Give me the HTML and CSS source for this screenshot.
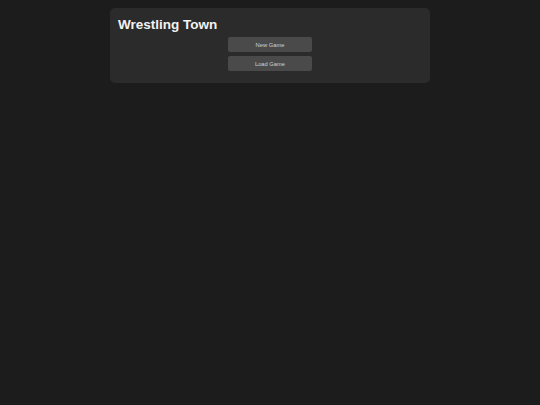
FILE: index.html
```html
<!DOCTYPE html>
<html>
<head>
  <title>Wrestling Town</title>
  <link rel="stylesheet" href="styles.css">
</head>
<body>
  <div id="game">
    <h1>Wrestling Town</h1>
    <div class="menu">
      <button id="newGame">New Game</button>
      <button id="loadGame">Load Game</button>
    </div>
  </div>
</body>
</html>
```

FILE: styles.css
```css
body {
  font-family: "Liberation Sans", Arial, sans-serif;
  background-color: #1c1c1c;
  color: #f2f2f2;
  margin: 0;
  padding: 8px 0;
}
#game {
  width: 304px;
  margin: 0 auto;
  background-color: #2b2b2b;
  border-radius: 5px;
  padding: 9px 8px 12px;
}
h1 {
  font-size: 13.5px;
  font-weight: bold;
  margin: 0 0 4px;
  line-height: 16px;
}
.menu {
  display: flex;
  flex-direction: column;
  align-items: center;
  gap: 4px;
}
.menu button {
  width: 84px;
  height: 15px;
  padding: 0;
  font-family: "Liberation Sans", Arial, sans-serif;
  font-size: 5.75px;
  color: #d0d0d0;
  background-color: #4a4a4a;
  border: none;
  border-radius: 2px;
}
```
